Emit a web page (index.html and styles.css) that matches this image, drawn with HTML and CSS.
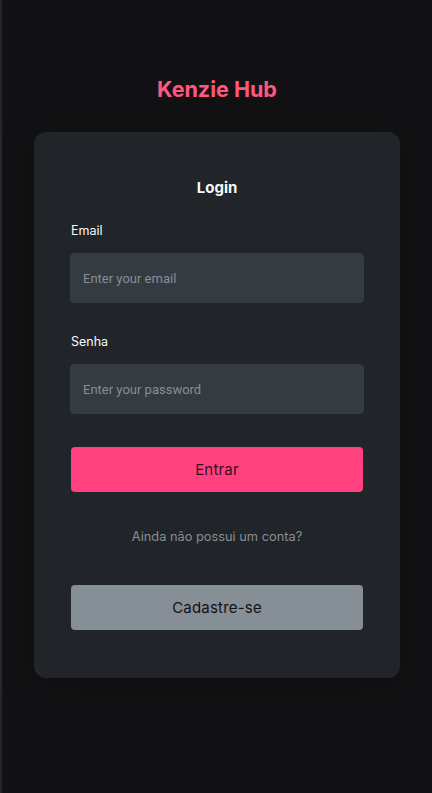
FILE: index.html
```html
<!DOCTYPE html>
<html lang="pt-BR">
<head>
<meta charset="utf-8">
<title>Kenzie Hub - Login</title>
<link rel="stylesheet" href="styles.css">
</head>
<body>
<main class="page">
  <h1 class="logo">Kenzie Hub</h1>
  <form class="card">
    <h2 class="card-title">Login</h2>
    <label class="label" for="email">Email</label>
    <input class="input" id="email" type="email" placeholder="Enter your email">
    <label class="label label-second" for="password">Senha</label>
    <input class="input" id="password" type="password" placeholder="Enter your password">
    <button class="btn btn-primary" type="button">Entrar</button>
    <p class="hint">Ainda não possui um conta?</p>
    <button class="btn btn-grey" type="button">Cadastre-se</button>
  </form>
</main>
</body>
</html>
```

FILE: styles.css
```css
* { box-sizing: border-box; }
html, body { margin: 0; padding: 0; }
body {
  background: #121214;
  border-left: 2px solid #26272b;
  min-height: 793px;
  font-family: Inter, "Noto Sans", sans-serif;
  color: #f8f9fa;
}
.page {
  display: flex;
  flex-direction: column;
  align-items: center;
  padding-top: 76px;
}
.logo {
  margin: 0;
  font-size: 21.5px;
  line-height: 27px;
  font-weight: 700;
  color: #ff577f;
}
.card {
  margin-top: 29px;
  width: 366px;
  background: #212529;
  border-radius: 12px;
  box-shadow: 0 4px 40px -4px rgba(0,0,0,0.25);
  padding: 47px 36px 48px;
  display: flex;
  flex-direction: column;
}
.card-title {
  margin: 0;
  text-align: center;
  font-size: 15px;
  line-height: 18px;
  font-weight: 700;
  color: #f8f9fa;
}
.label {
  margin-top: 26px;
  padding-left: 1px;
  font-size: 12.5px;
  line-height: 15px;
  color: #f8f9fa;
}
.label-second { margin-top: 31px; }
.input {
  margin-top: 15px;
  height: 50px;
  width: 100%;
  background: #343b41;
  border: 1px solid #343b41;
  border-radius: 4px;
  padding: 0 12px;
  font-family: Roboto, "Liberation Sans", sans-serif;
  font-size: 13px;
  color: #f8f9fa;
  outline: none;
}
.input::placeholder { color: #868e96; }
.btn {
  margin: 0 1px;
  height: 45px;
  border: none;
  border-radius: 4px;
  font-family: Inter, "Noto Sans", sans-serif;
  font-size: 15px;
  font-weight: 400;
  color: #1c1d20;
  letter-spacing: 0.2px;
}
.btn-primary {
  margin-top: 33px;
  background: #ff427f;
  color: #3a0d1e;
}
.btn-grey {
  background: #868e96;
  color: #121214;
}
.hint {
  margin: 37px 0 40px;
  text-align: center;
  font-size: 12.8px;
  line-height: 16px;
  color: #868e96;
}
```
